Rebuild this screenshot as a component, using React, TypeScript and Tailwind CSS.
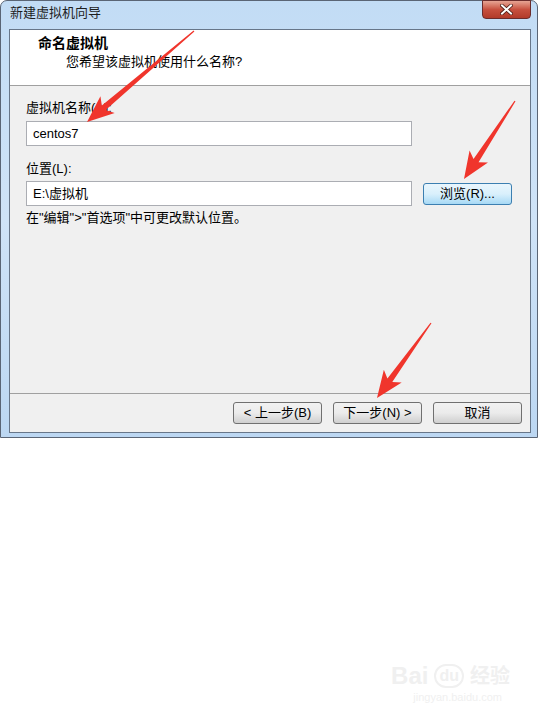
import React from 'react'

const ui = { fontFamily: '"Liberation Sans", "Noto Sans CJK SC", sans-serif' }

type Pt = [number, number]

// red annotation arrow: thin tail, thick head
function arrowPoints(tail: Pt, tip: Pt) {
  const dx = tip[0] - tail[0]
  const dy = tip[1] - tail[1]
  const len = Math.hypot(dx, dy)
  const ux = dx / len
  const uy = dy / len
  const nx = -uy
  const ny = ux
  const headLen = 27
  const headW = 11
  const neckW = 3
  const bx = tip[0] - ux * headLen
  const by = tip[1] - uy * headLen
  const pts: Pt[] = [
    [tail[0] + nx * 0.6, tail[1] + ny * 0.6],
    [bx + nx * neckW + ux * 5, by + ny * neckW + uy * 5],
    [bx + nx * headW, by + ny * headW],
    tip,
    [bx - nx * headW, by - ny * headW],
    [bx - nx * neckW + ux * 5, by - ny * neckW + uy * 5],
    [tail[0] - nx * 0.6, tail[1] - ny * 0.6],
  ]
  return pts.map((p) => p.join(',')).join(' ')
}

function Arrows() {
  const arrows: [Pt, Pt][] = [
    [[194, 31], [87, 122]],
    [[515, 101], [464, 179]],
    [[431, 323], [377, 398]],
  ]
  return (
    <svg
      className="absolute left-0 top-0 pointer-events-none"
      width="540"
      height="440"
      viewBox="0 0 540 440"
    >
      {arrows.map(([t, p], i) => (
        <polygon key={i} points={arrowPoints(t, p)} fill="#f0352c" />
      ))}
    </svg>
  )
}

function WinButton({ children, focus }: { children: React.ReactNode; focus?: boolean }) {
  return (
    <button
      className={
        'h-[22px] w-[89px] rounded-[3px] border text-[13px] text-black flex items-center justify-center bg-gradient-to-b ' +
        (focus
          ? 'border-[#3c7fb1] from-[#eaf6fd] via-[#d9f0fc] to-[#a7d9f5]'
          : 'border-[#707070] from-[#f2f2f2] via-[#ebebeb] to-[#cfcfcf]')
      }
    >
      {children}
    </button>
  )
}

export default function App() {
  return (
    <div className="w-[540px] h-[719px] bg-white flex flex-col relative" style={ui}>
      <div className="w-[538px] h-[438px] rounded-t-[7px] border border-[#5a6575] bg-gradient-to-b from-[#c2dcf5] via-[#cfe3f7] to-[#bcd7f2] pl-[8px] pr-[6px] pb-[4px] flex flex-col">
        <div className="h-[28px] shrink-0 flex items-start justify-between">
          <span className="mt-[4px] ml-[1px] text-[13px] leading-[16px] text-[#1e1e1e]">新建虚拟机向导</span>
          <div className="w-[49px] h-[19px] -mt-[1px] rounded-b-[4px] border border-[#6b2c2c] bg-gradient-to-b from-[#e6a494] via-[#c7503f] to-[#b23a2a] flex items-center justify-center">
            <svg width="13" height="11" viewBox="0 0 13 11">
              <path d="M2 1.5 L11 9.5 M11 1.5 L2 9.5" stroke="#4a1a14" strokeWidth="3.6" strokeLinecap="square" />
              <path d="M2 1.5 L11 9.5 M11 1.5 L2 9.5" stroke="#ffffff" strokeWidth="2" strokeLinecap="square" />
            </svg>
          </div>
        </div>
        <div className="flex-1 border border-[#677689] bg-[#f0f0f0] flex flex-col">
          <div className="h-[56px] shrink-0 bg-white border-b border-[#a0a0a0] pl-[28px] pt-[5px]">
            <div className="text-[14px] font-bold text-black leading-[16px]">命名虚拟机</div>
            <div className="text-[13px] text-black leading-[16px] ml-[28px] mt-[3px]">您希望该虚拟机使用什么名称?</div>
          </div>
          <div className="flex-1 pl-[16px] pr-[18px] pt-[14px] flex flex-col">
            <div className="text-[13px] leading-[16px] text-black">虚拟机名称(A):</div>
            <div className="mt-[5px] w-[386px] h-[25px] border border-[#abadb3] bg-white flex items-center pl-[6px] text-[13px] text-black">
              centos7
            </div>
            <div className="mt-[15px] text-[13px] leading-[16px] text-black">位置(L):</div>
            <div className="mt-[4px] flex items-center gap-[11px]">
              <div className="w-[386px] h-[25px] border border-[#abadb3] bg-white flex items-center pl-[6px] text-[13px] text-black">
                E:\虚拟机
              </div>
              <WinButton focus>浏览(R)...</WinButton>
            </div>
            <div className="mt-[4px] text-[13px] leading-[16px] text-black">在"编辑"&gt;"首选项"中可更改默认位置。</div>
          </div>
          <div className="h-[39px] shrink-0 border-t border-[#a0a0a0] flex items-center justify-end gap-[11px] pr-[8px]">
            <WinButton>&lt; 上一步(B)</WinButton>
            <WinButton>下一步(N) &gt;</WinButton>
            <WinButton>取消</WinButton>
          </div>
        </div>
      </div>
      <div className="flex-1 flex flex-col items-end justify-end pr-[30px] pb-[14px]">
        <div className="flex items-end gap-[6px] text-[#f0f0f0]">
          <span className="text-[24px] font-bold leading-[24px]">Bai</span>
          <span className="text-[16px] font-bold leading-[20px] border-2 border-[#f0f0f0] rounded-full px-[3px]">du</span>
          <span className="text-[20px] font-bold leading-[24px]">经验</span>
        </div>
        <div className="text-[11px] text-[#f0f0f0] mt-[1px] mr-[8px]">jingyan.baidu.com</div>
      </div>
      <Arrows />
    </div>
  )
}
